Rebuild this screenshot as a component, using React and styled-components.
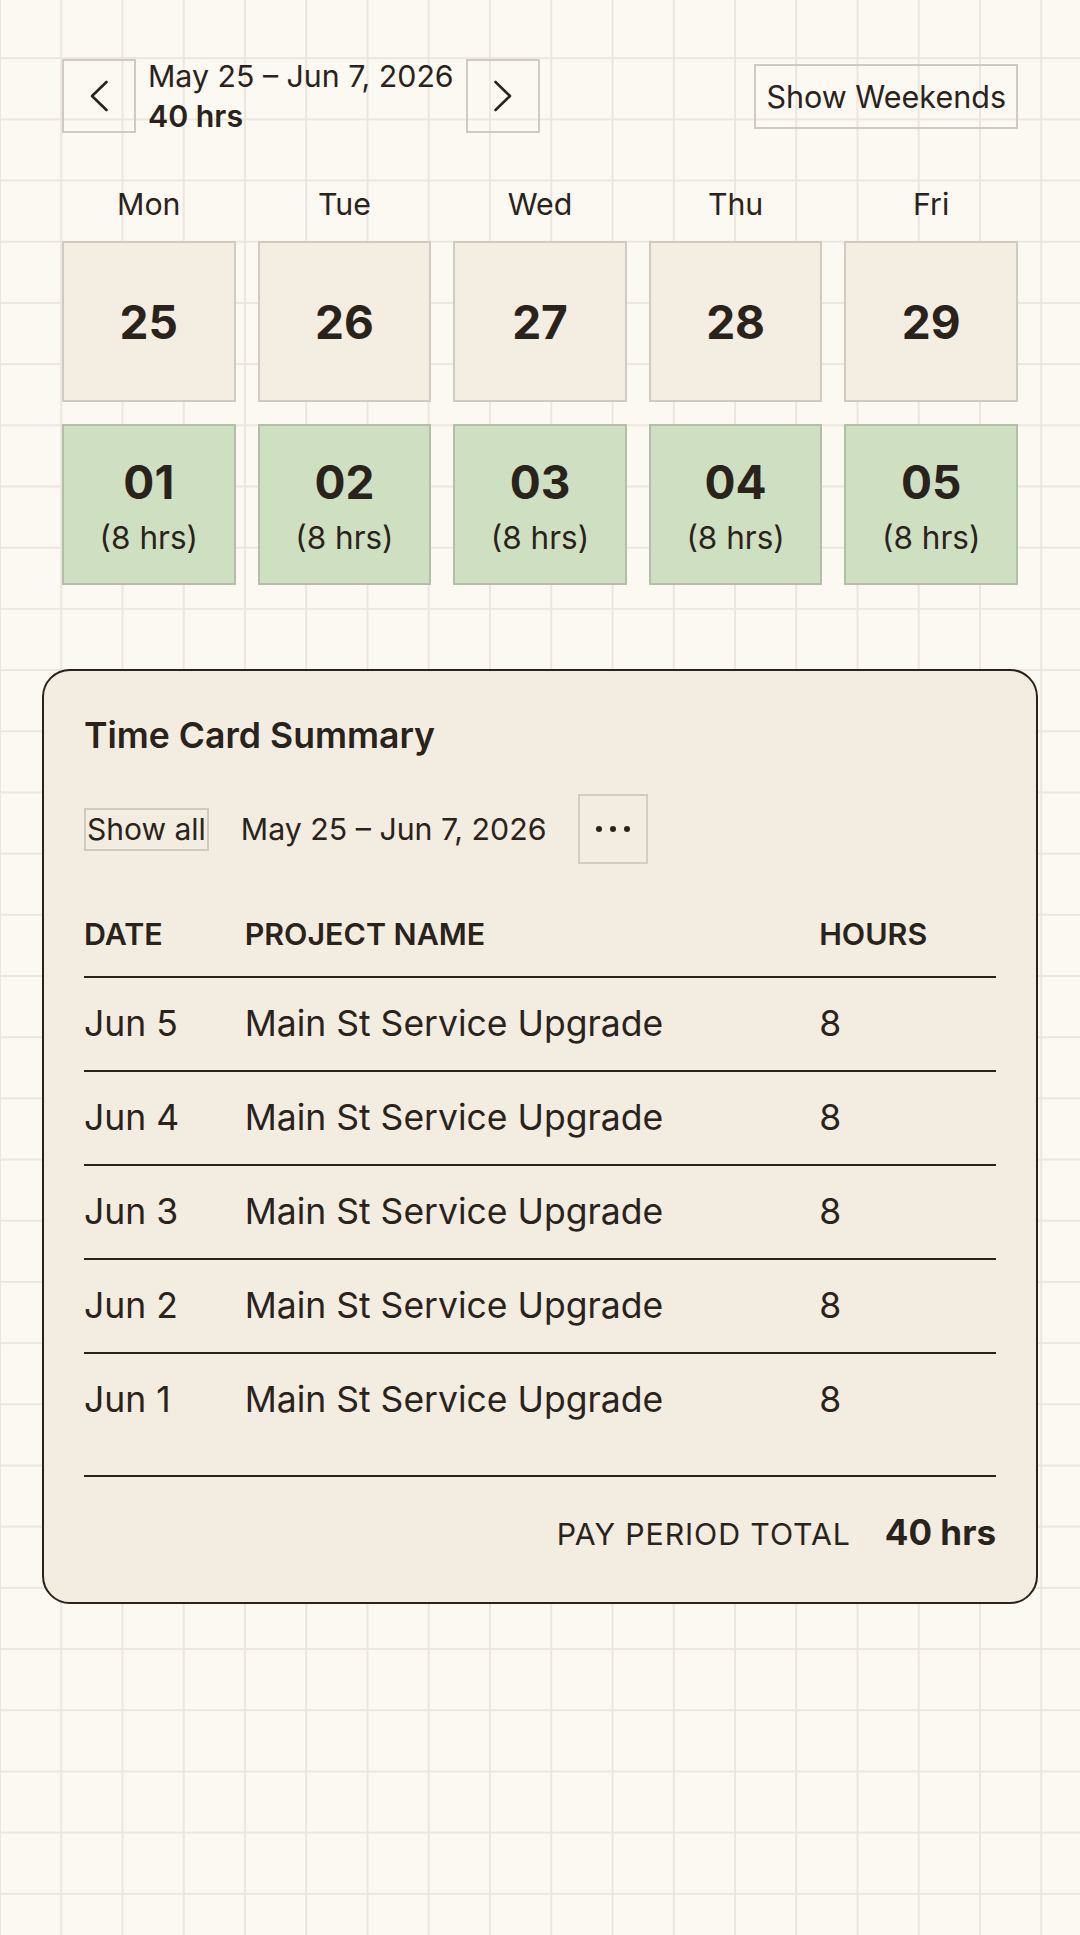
import React from "react";
import styled, { createGlobalStyle } from "styled-components";

const INK = "#2a231b";

const GlobalStyle = createGlobalStyle`
  html, body { margin: 0; padding: 0; }
  body {
    min-height: 1935px;
    background-color: #fcf8f2;
    background-image:
      linear-gradient(to right, #ece6df 0, #ece6df 2px, transparent 2px),
      linear-gradient(to bottom, #ece6df 0, #ece6df 2px, transparent 2px);
    background-size: 61.26px 61.2px;
    background-position: -1px -4px;
    font-family: Inter, "Noto Sans", sans-serif;
    color: ${INK};
  }
  * { box-sizing: border-box; }
  button { font-family: inherit; color: inherit; }
`;

const Page = styled.div`
  padding: 56px 62px 0;
`;

const Header = styled.header`
  display: flex;
  align-items: center;
  justify-content: space-between;
`;

const NavGroup = styled.div`
  display: flex;
  align-items: center;
  gap: 12px;
`;

const NavButton = styled.button`
  width: 74px;
  height: 74px;
  display: flex;
  align-items: center;
  justify-content: center;
  background: transparent;
  border: 2px solid #d0cac2;
  padding: 0;
  cursor: pointer;
`;

const RangeInfo = styled.div`
  display: flex;
  flex-direction: column;
  font-size: 30.3px;
  line-height: 40px;
`;

const RangeText = styled.span`
  font-weight: 400;
`;

const RangeTotal = styled.span`
  font-weight: 600;
`;

const ToggleButton = styled.button`
  background: transparent;
  border: 2px solid #d0cac2;
  font-size: 30.5px;
  line-height: 37px;
  padding: 12px 10px;
  cursor: pointer;
`;

const DayGrid = styled.div`
  margin-top: 53px;
  display: grid;
  grid-template-columns: repeat(5, 1fr);
  gap: 22px;
`;

const DayLabel = styled.div`
  text-align: center;
  font-size: 30.3px;
  line-height: 30px;
`;

const DayCell = styled.div`
  height: 161px;
  display: flex;
  flex-direction: column;
  align-items: center;
  justify-content: center;
  padding-top: 2px;
  background: ${(p) => (p.$logged ? "#cfe0c2" : "#f3ede2")};
  border: 2px solid ${(p) => (p.$logged ? "#b3bea9" : "#d0cac2")};
`;

const DayNumber = styled.div`
  font-size: 46px;
  font-weight: 700;
  line-height: 1.2;
`;

const DayHours = styled.div`
  margin-top: 10px;
  font-size: 31.5px;
  line-height: 36px;
`;

const Card = styled.section`
  margin: 84px -20px 0;
  padding: 43px 40px 49px;
  background: #f3ece0;
  border: 2px solid ${INK};
  border-radius: 28px;
`;

const CardTitle = styled.h2`
  margin: 0;
  font-size: 35.6px;
  line-height: 44px;
  font-weight: 600;
`;

const Toolbar = styled.div`
  margin-top: 36px;
  display: flex;
  align-items: center;
  gap: 32px;
`;

const ShowAllButton = styled.button`
  background: transparent;
  border: 2px solid #d0c9be;
  font-size: 30px;
  line-height: 39px;
  padding: 0 1px;
  cursor: pointer;
`;

const ToolbarRange = styled.span`
  font-size: 30.3px;
  line-height: 40px;
`;

const MoreButton = styled.button`
  width: 70px;
  height: 70px;
  display: flex;
  align-items: center;
  justify-content: center;
  background: transparent;
  border: 2px solid #d3ccc1;
  padding: 0;
  cursor: pointer;
`;

const Table = styled.div`
  margin-top: 52px;
`;

const TableRow = styled.div`
  display: grid;
  grid-template-columns: 160.7px 574.5px 1fr;
  align-items: center;
  border-bottom: ${(p) => (p.$last ? "none" : `2px solid ${INK}`)};
  padding: ${(p) => (p.$head ? "0 0 24px" : "25px 0")};
`;

const HeadCell = styled.div`
  font-size: 30.4px;
  line-height: 36px;
  font-weight: 600;
`;

const Cell = styled.div`
  font-size: 35.5px;
  line-height: 42px;
`;

const TotalRow = styled.div`
  margin-top: 29px;
  border-top: 2px solid ${INK};
  padding-top: 34px;
  display: flex;
  justify-content: flex-end;
  align-items: baseline;
  gap: 34px;
`;

const TotalLabel = styled.span`
  font-size: 30.3px;
  letter-spacing: 0.9px;
  line-height: 36px;
`;

const TotalValue = styled.span`
  font-size: 35px;
  font-weight: 700;
  line-height: 42px;
`;

const Chevron = ({ dir }) => (
  <svg width="22" height="34" viewBox="0 0 22 34" fill="none">
    <polyline
      points={dir === "left" ? "18.5,3 4,17 18.5,31" : "3.5,3 18,17 3.5,31"}
      stroke={INK}
      strokeWidth="2.6"
      strokeLinecap="round"
      strokeLinejoin="round"
    />
  </svg>
);

const Dots = () => (
  <svg width="36" height="8" viewBox="0 0 36 8">
    <circle cx="4" cy="4" r="3" fill={INK} />
    <circle cx="18" cy="4" r="3" fill={INK} />
    <circle cx="32" cy="4" r="3" fill={INK} />
  </svg>
);

const days = ["Mon", "Tue", "Wed", "Thu", "Fri"];
const week1 = ["25", "26", "27", "28", "29"];
const week2 = ["01", "02", "03", "04", "05"];
const entries = [
  { date: "Jun 5", project: "Main St Service Upgrade", hours: "8" },
  { date: "Jun 4", project: "Main St Service Upgrade", hours: "8" },
  { date: "Jun 3", project: "Main St Service Upgrade", hours: "8" },
  { date: "Jun 2", project: "Main St Service Upgrade", hours: "8" },
  { date: "Jun 1", project: "Main St Service Upgrade", hours: "8" },
];

export default function App() {
  return (
    <>
      <GlobalStyle />
      <Page>
        <Header>
          <NavGroup>
            <NavButton aria-label="Previous period">
              <Chevron dir="left" />
            </NavButton>
            <RangeInfo>
              <RangeText>May 25 – Jun 7, 2026</RangeText>
              <RangeTotal>40 hrs</RangeTotal>
            </RangeInfo>
            <NavButton aria-label="Next period">
              <Chevron dir="right" />
            </NavButton>
          </NavGroup>
          <ToggleButton>Show Weekends</ToggleButton>
        </Header>

        <DayGrid>
          {days.map((d) => (
            <DayLabel key={d}>{d}</DayLabel>
          ))}
          {week1.map((n) => (
            <DayCell key={n}>
              <DayNumber>{n}</DayNumber>
            </DayCell>
          ))}
          {week2.map((n) => (
            <DayCell key={n} $logged>
              <DayNumber>{n}</DayNumber>
              <DayHours>(8 hrs)</DayHours>
            </DayCell>
          ))}
        </DayGrid>

        <Card>
          <CardTitle>Time Card Summary</CardTitle>
          <Toolbar>
            <ShowAllButton>Show all</ShowAllButton>
            <ToolbarRange>May 25 – Jun 7, 2026</ToolbarRange>
            <MoreButton aria-label="More options">
              <Dots />
            </MoreButton>
          </Toolbar>
          <Table>
            <TableRow $head>
              <HeadCell>DATE</HeadCell>
              <HeadCell>PROJECT NAME</HeadCell>
              <HeadCell>HOURS</HeadCell>
            </TableRow>
            {entries.map((e, i) => (
              <TableRow key={e.date} $last={i === entries.length - 1}>
                <Cell>{e.date}</Cell>
                <Cell>{e.project}</Cell>
                <Cell>{e.hours}</Cell>
              </TableRow>
            ))}
          </Table>
          <TotalRow>
            <TotalLabel>PAY PERIOD TOTAL</TotalLabel>
            <TotalValue>40 hrs</TotalValue>
          </TotalRow>
        </Card>
      </Page>
    </>
  );
}
